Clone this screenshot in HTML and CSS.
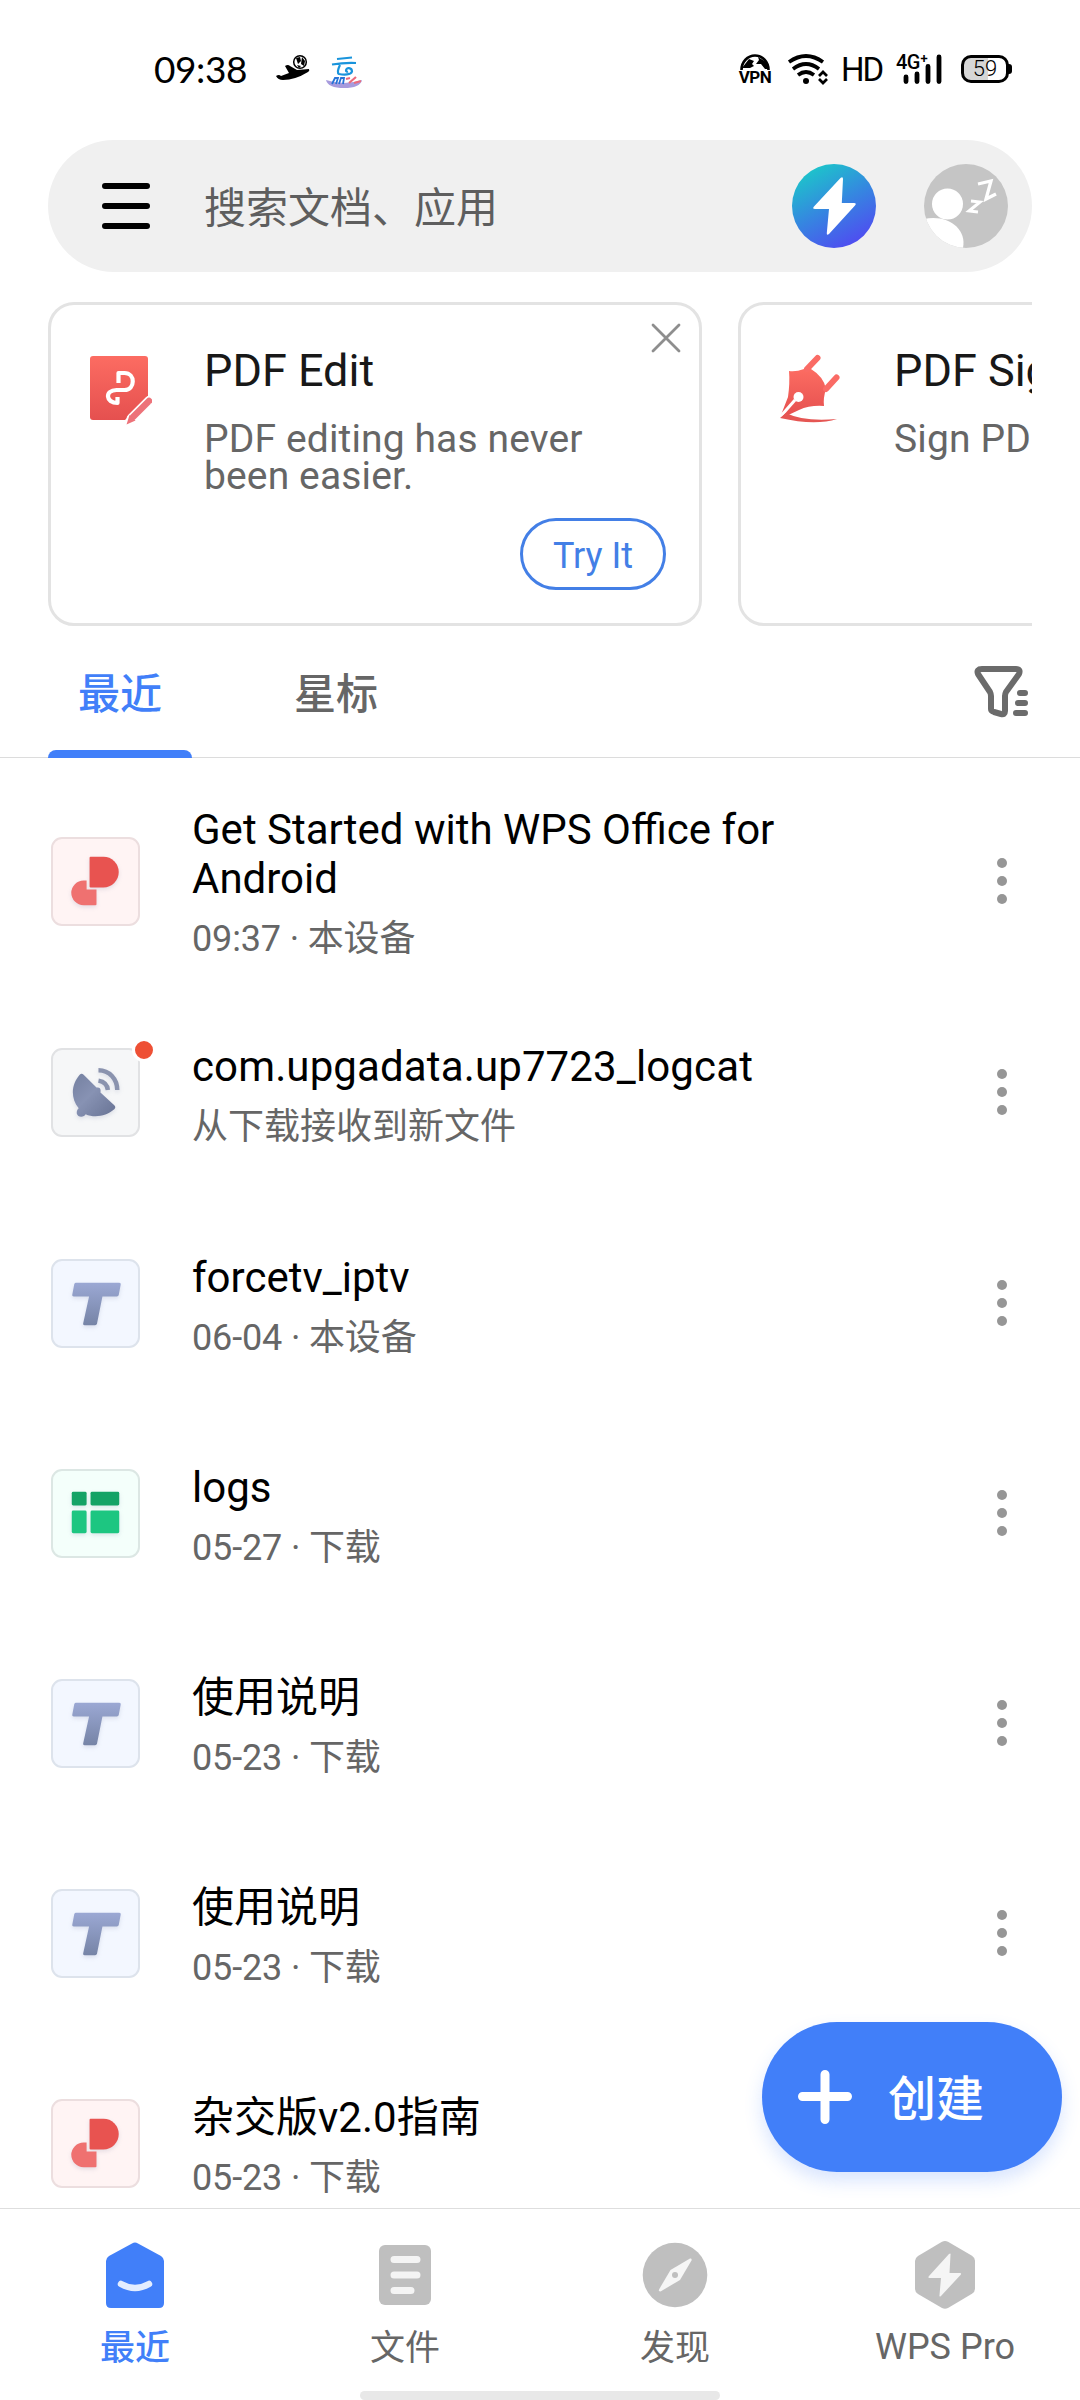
FILE: index.html
```html
<!DOCTYPE html>
<html lang="zh-CN">
<head>
<meta charset="utf-8">
<title>WPS Office</title>
<link rel="stylesheet" href="styles.css">
</head>
<body>
<svg class="defs" width="0" height="0">
  <defs>
    <linearGradient id="g-bolt" x1="0.2" y1="0" x2="0.75" y2="1"><stop offset="0" stop-color="#1acbc8"/><stop offset="0.5" stop-color="#3587e0"/><stop offset="1" stop-color="#5148f2"/></linearGradient>
    <linearGradient id="g-red" x1="0" y1="0" x2="0" y2="1"><stop offset="0" stop-color="#fc6c62"/><stop offset="1" stop-color="#e5504f"/></linearGradient>
    <linearGradient id="g-slate" x1="0" y1="0" x2="0" y2="1"><stop offset="0" stop-color="#9ba8d4"/><stop offset="1" stop-color="#7684a6"/></linearGradient>
    <linearGradient id="g-dish" x1="0" y1="0" x2="1" y2="1"><stop offset="0" stop-color="#7480a0"/><stop offset="0.45" stop-color="#8792b3"/><stop offset="1" stop-color="#687394"/></linearGradient>
    <symbol id="pdf" viewBox="0 0 90 90">
      <path d="M40 20h13a15.500 15.500 0 0 1 0 31H40a1 1 0 0 1-1-1V21a1 1 0 0 1 1-1z" fill="#e85350"/>
      <path d="M33 44h3v9h10v15a1 1 0 0 1-1 1H33a12.500 12.500 0 0 1 0-25z" fill="#ef7170"/>
    </symbol>
    <symbol id="txt" viewBox="0 0 90 90">
      <path d="M25 24h44a1.500 1.500 0 0 1 1.500 1.800l-2 10.700a2 2 0 0 1-2 1.500H52l-5.500 27.500a2 2 0 0 1-2 1.500H34a1.500 1.500 0 0 1-1.500-1.800L38.500 38H23a1.500 1.500 0 0 1-1.500-1.800l2-10.700A2 2 0 0 1 25 24z" fill="url(#g-slate)"/>
    </symbol>
    <symbol id="sheet" viewBox="0 0 90 90">
      <rect x="21" y="23" width="15" height="14" rx="1.500" fill="#14a366"/><rect x="40" y="23" width="29" height="14" rx="1.500" fill="#14a366"/>
      <rect x="21" y="42" width="15" height="23" rx="1.500" fill="#1dc681"/><rect x="40" y="42" width="29" height="23" rx="1.500" fill="#1dc681"/>
    </symbol>
    <symbol id="dish" viewBox="0 0 90 90">
      <path d="M29 27q2-2 4 0l13 13q5-1 4 5l14 13q2 2 0 4c-8 7-20 9-29 5-1 3-8 4-9-1 0-3 1-4 2-5-9-11-7-25 1-34z" fill="url(#g-dish)"/>
      <path d="M48 22.500c11 0 19 9 19 20" fill="none" stroke="#8a93ae" stroke-width="4.500"/>
      <path d="M48 33c6 1 9 4 9.500 9.500" fill="none" stroke="#8a93ae" stroke-width="4.500"/>
    </symbol>
  </defs>
</svg>

<header class="status">
  <span class="clock">09:38</span>
  <svg class="s-plane" viewBox="276 54 34 27" width="34" height="27">
    <circle cx="300" cy="62" r="6.300" fill="#fff" stroke="#000" stroke-width="1.500"/>
    <path d="M296 58l4-1 1 4-3 3zM302 57l3 4-1 5-3-2zM297 65l4 1-2 2z"/>
    <path d="M276 76q3-2 5 0l8-3-4-7q3-2 5 0l7 4 12-1q1 2-1 3-13 8-25 8-5 0-7-4z"/>
  </svg>
  <svg class="s-cloud" viewBox="325 54 38 34" width="38" height="34">
    <path d="M337 58l15-1.500M332 63.500q12-2 24-1.500M340 64c-2 4-3 8-1 9 5 1 12 1 13-2.500 0-4-6-4.500-6-1 0 1 1 1.500 2 1" fill="none" stroke="#1994dc" stroke-width="2.200"/>
    <path d="M326 79q18 6 36 0-2 8-18 8t-18-8z" fill="#a79bdd"/>
    <path d="M332 83l3-6h3l-2 6M339 83l2-6 3 0-1 6" fill="none" stroke="#2774d8" stroke-width="1.800"/>
    <path d="M346 78l4-1M349 82l7-6M354 82l7-2" fill="none" stroke="#ec6b7c" stroke-width="2.200"/>
  </svg>
  <span class="s-space"></span>
  <span class="vpn">
    <svg viewBox="0 0 30 16" width="30" height="16"><path d="M1.500 16a13.500 14.500 0 0 1 27 0" fill="#fff" stroke="#000" stroke-width="2.600"/><path d="M2 14L9 5l5 2-2 3 2 2-4 2zM18 3l8 5 3 7h-4l-4-5-5 0 3-4z"/></svg>
    <b>VPN</b>
  </span>
  <svg class="s-wifi" viewBox="789 53 41 32" width="41" height="32">
    <g fill="none" stroke="#000" stroke-width="3.700"><path d="M791 62q17-12 34 0M795 69q13-10 26 0M800 75q8-6 16 0"/><path d="M821 76l4-4 4 4M821 79l4 4 4-4" stroke-width="2.700"/></g><circle cx="808" cy="81" r="3"/>
  </svg>
  <span class="hd">HD</span>
  <span class="net"><i>4G⁺</i>
    <svg viewBox="0 0 39 30" width="39" height="30"><path d="M3 23v4.500M14 20v7.500M25 12.500v15M36 3v24.500" stroke="#000" stroke-width="4.800" stroke-linecap="round"/></svg>
  </span>
  <span class="battery"><span>59</span></span>
</header>

<div class="search">
  <svg class="burger" viewBox="0 0 48 46" width="48" height="46"><path d="M3 3h42M3 23h42M3 43h42" stroke="#000" stroke-width="6" stroke-linecap="round"/></svg>
  <span class="placeholder">搜索文档、应用</span>
  <svg viewBox="0 0 84 84" width="84" height="84"><circle cx="42" cy="42" r="42" fill="url(#g-bolt)"/><path d="M48.500 14q2.500-2 2.500 1l-1.200 24H62q3 0 1 2.500L37 70q-2.500 2-2.200-1L37 45H23q-3 0-1-2.500z" fill="#fff"/></svg>
  <svg viewBox="0 0 84 84" width="84" height="84"><clipPath id="av"><circle cx="42" cy="42" r="42"/></clipPath><g clip-path="url(#av)"><path d="M0 0h84v84H0z" fill="#c5c5c5"/><circle cx="23.500" cy="40" r="15.500" fill="#fff"/><path d="M0 55c23-5 43 9 39 29H0z" fill="#fff"/><path d="M47 37l9 1-11 9 9 1" fill="none" stroke="#fff" stroke-width="3"/><path d="M54 20l13-3-5 18 10-5" fill="none" stroke="#fff" stroke-width="3.300"/></g></svg>
</div>

<section class="cards">
  <article class="card">
    <svg class="card-icon" viewBox="86 350 66 76" width="66" height="76">
      <path d="M93 356h52q3 0 3 3v37l-23 24H93q-3 0-3-3v-58q0-3 3-3z" fill="url(#g-red)"/>
      <path d="M118.500 383v-10h6c11 0 11 17 0 17h-8c-12 0-11 13 1 13v-6" fill="none" stroke="#fff" stroke-width="4.200" stroke-linejoin="round"/>
      <path d="M150 401L132 419" stroke="#fff" stroke-width="11" stroke-linecap="round"/>
      <path d="M149 401L133 417" stroke="#ed7279" stroke-width="6.500" stroke-linecap="round"/><path d="M129.500 415l6 5.500-9 4z" fill="#ed7279"/>
    </svg>
    <div class="card-body"><h2>PDF Edit</h2><p>PDF editing has never been easier.</p></div>
    <button class="try">Try It</button>
    <svg class="close" viewBox="0 0 30 30" width="30" height="30"><path d="M2 2l26 26M28 2L2 28" stroke="#8e8e8e" stroke-width="2.800" stroke-linecap="round"/></svg>
  </article>
  <article class="card">
    <svg class="card-icon" viewBox="777 350 66 76" width="66" height="76">
      <path d="M790 371q7 1 15-2l7 0q13 8 15 20-3 9-2 17-14-1-25 4l-15 7q-2-2-3-2l7-18q2-14 1-26z" fill="url(#g-red)"/>
      <path d="M808 369l10.500-11M827 389l10.500-11.500" stroke="#fa6b65" stroke-width="6" stroke-linecap="round"/>
      <path d="M781 417l15-17" stroke="#fff" stroke-width="3"/><circle cx="799.500" cy="397" r="5" fill="#fff"/>
      <path d="M781 418l6-5q18 9 51 6-22 7-57-1z" fill="#e55653"/>
    </svg>
    <div class="card-body"><h2>PDF Sign</h2><p>Sign PDFs</p></div>
  </article>
</section>

<nav class="tabs">
  <span class="tab on">最近</span><span class="tab">星标</span>
  <svg class="filter" viewBox="974 664 58 56" width="58" height="56"><g fill="none" stroke="#6b6b6b" stroke-linejoin="round" stroke-linecap="round"><path d="M982 669h34q5 0 3 5l-13 18q-1 2-1 4v15q0 4-4 3l-7-2q-3-1-3-3v-13q0-2-1-4l-12-18q-2-5 4-5z" stroke-width="6"/><path d="M1020 693h5M1018 703h7M1016 713h9" stroke-width="6"/></g></svg>
</nav>

<main class="list">
  <div class="row first"><span class="file red"><svg><use href="#pdf"/></svg></span><div class="info"><h3>Get Started with WPS Office for Android</h3><p>09:37 · 本设备</p></div><span class="more"><i></i><i></i><i></i></span></div>
  <div class="row second"><span class="file gray"><svg><use href="#dish"/></svg><em class="badge"></em></span><div class="info"><h3>com.upgadata.up7723_logcat</h3><p>从下载接收到新文件</p></div><span class="more"><i></i><i></i><i></i></span></div>
  <div class="row"><span class="file blue"><svg><use href="#txt"/></svg></span><div class="info"><h3>forcetv_iptv</h3><p>06-04 · 本设备</p></div><span class="more"><i></i><i></i><i></i></span></div>
  <div class="row"><span class="file green"><svg><use href="#sheet"/></svg></span><div class="info"><h3>logs</h3><p>05-27 · 下载</p></div><span class="more"><i></i><i></i><i></i></span></div>
  <div class="row"><span class="file blue"><svg><use href="#txt"/></svg></span><div class="info"><h3>使用说明</h3><p>05-23 · 下载</p></div><span class="more"><i></i><i></i><i></i></span></div>
  <div class="row"><span class="file blue"><svg><use href="#txt"/></svg></span><div class="info"><h3>使用说明</h3><p>05-23 · 下载</p></div><span class="more"><i></i><i></i><i></i></span></div>
  <div class="row"><span class="file red"><svg><use href="#pdf"/></svg></span><div class="info"><h3>杂交版v2.0指南</h3><p>05-23 · 下载</p></div></div>
</main>

<button class="create"><svg viewBox="0 0 54 54" width="54" height="54"><path d="M27 4.500v45M4.500 26.500h45" stroke="#fff" stroke-width="9" stroke-linecap="round"/></svg><span>创建</span></button>

<footer class="bottom">
  <div class="item on"><svg viewBox="0 0 70 70" width="70" height="70"><path d="M32 3.500q3-2 6 0L61 16q3 2 3 5v42q0 5-5 5H11q-5 0-5-5V21q0-3 3-5z" fill="#417ff9"/><path d="M21 44q14 8 28 0" fill="none" stroke="#e3edff" stroke-width="6.500" stroke-linecap="round"/></svg><span>最近</span></div>
  <div class="item"><svg viewBox="0 0 70 70" width="70" height="70"><rect x="9" y="5" width="52" height="60" rx="6" fill="#bfbfbf"/><path d="M24 19.500h23M24 35h23M24 50.500h17" stroke="#f4f4f4" stroke-width="7" stroke-linecap="round"/></svg><span>文件</span></div>
  <div class="item"><svg viewBox="0 0 70 70" width="70" height="70"><circle cx="35" cy="35" r="32.300" fill="#bfbfbf"/><path d="M50 18.500q2-.5 1.500 2L40 40 20.500 51.500q-2 0-1.500-2L30.500 30z" fill="#f6f6f6"/><circle cx="35" cy="35" r="3" fill="#bfbfbf"/></svg><span>发现</span></div>
  <div class="item pro"><svg viewBox="0 0 70 70" width="70" height="70"><path d="M32 1.800q3-1.600 6 0l24 14q3 2 3 5v28q0 3-3 5L38 68q-3 1.600-6 0L8 54q-3-2-3-5V21q0-3 3-5z" fill="#bfbfbf"/><path d="M39 14q2-1.500 1.500 1L39.500 33H50q2 0 .5 2L31 56q-2 1.500-1.500-1L31 38H19.500q-2 0-.5-2z" fill="#f5f5f5"/></svg><span>WPS Pro</span></div>
</footer>
<div class="homebar"></div>
</body>
</html>
```
FILE: styles.css
```css
* { box-sizing: border-box; margin: 0; padding: 0; }
body { width: 1080px; height: 2400px; overflow: hidden; background: #fff; position: relative; display: flex; flex-direction: column; font-family: Roboto, "Noto Sans CJK SC", sans-serif; color: #000; }
svg { display: block; flex: none; }
button { background: none; border: 0; font-family: inherit; }
.defs { position: absolute; }

.status { height: 140px; flex: none; display: flex; align-items: flex-start; padding: 0 71px 0 154px; }
.clock { font: 37px/46px Lato, sans-serif; width: 95px; margin-top: 46px; letter-spacing: -0.4px; white-space: nowrap; }
.s-plane { margin: 54px 0 0 27px; }
.s-cloud { margin: 55px 0 0 15px; }
.s-space { flex: 1; }
.vpn { width: 32px; margin: 54px 16px 0 0; display: flex; flex-direction: column; align-items: center; }
.vpn b { font: 700 17px/15px Roboto, sans-serif; letter-spacing: -0.5px; }
.s-wifi { margin-top: 53px; }
.hd { font: 33px/40px Roboto, sans-serif; margin: 50px 0 0 13px; width: 40px; letter-spacing: -2px; }
.net { position: relative; width: 46px; height: 32px; margin: 54px 19px 0 15px; display: flex; justify-content: flex-end; }
.net i { position: absolute; left: 0; top: -3px; font: 500 20px/22px Roboto, sans-serif; letter-spacing: -0.5px; white-space: nowrap; }
.battery { position: relative; width: 48px; height: 28px; margin-top: 55px; border: 3px solid #000; border-radius: 10px; background: linear-gradient(90deg, #d6d6d6 58%, #fff 58%); font: 300 22px/22px Roboto, sans-serif; text-align: center; }
.battery::after { content: ""; position: absolute; right: -6px; top: 6px; width: 4px; height: 10px; background: #000; border-radius: 0 3px 3px 0; }

.search { height: 132px; flex: none; margin: 0 48px; padding: 0 24px 0 54px; border-radius: 66px; background: #f0f0f0; display: flex; align-items: center; }
.placeholder { flex: 1; margin-left: 54px; padding-top: 5px; font-size: 42px; line-height: 60px; color: #5e5e5e; }
.search svg:last-child { margin-left: 48px; }

.cards { margin: 30px 48px 0; height: 324px; flex: none; display: flex; gap: 36px; overflow: hidden; }
.card { position: relative; width: 654px; flex: none; border: 3px solid #e3e3e3; border-radius: 26px; display: flex; padding: 45px 30px 0 35px; }
.card-body { margin-left: 52px; width: 430px; margin-top: -5px; }
.card h2 { font-weight: 400; font-size: 45px; line-height: 52px; color: #181818; }
.card p { margin-top: 24px; font-size: 39px; line-height: 37px; letter-spacing: 0.13px; color: #666; }
.try { position: absolute; right: 33px; bottom: 33px; width: 146px; height: 72px; border: 3px solid #437fe6; border-radius: 36px; color: #437fe6; font-size: 36px; line-height: 66px; padding-top: 2px; }
.close { position: absolute; right: 18px; top: 18px; }

.tabs { height: 132px; flex: none; border-bottom: 1px solid #dcdcdc; padding: 0 48px; display: flex; align-items: stretch; }
.tab { position: relative; width: 144px; margin-right: 72px; text-align: center; font-size: 42px; line-height: 137px; font-weight: 500; color: #666; }
.tab.on { color: #417ff9; }
.tab.on::after { content: ""; position: absolute; left: 0; right: 0; bottom: -1px; height: 8px; border-radius: 8px 8px 0 0; background: #417ff9; }
.filter { margin: 38px 0 0 auto; }

.list { height: 1450px; flex: none; overflow: hidden; padding: 17px 0 0 51px; }
.row { height: 210px; display: flex; align-items: center; }
.row.first { height: 211px; }
.row.second { height: 212px; }
.file { position: relative; width: 89px; height: 89px; flex: none; border: 2px solid; border-radius: 11px; }
.first .file { margin-top: 2px; }
.file svg { width: 89px; height: 89px; margin: -2px; filter: drop-shadow(0 2px 2px rgba(90, 100, 140, .16)); }
.red { background: #fff4f4; border-color: #ecdedf; }
.gray { background: #f6f7f8; border-color: #e1e2e4; }
.blue { background: #f3f7ff; border-color: #dde3ec; }
.green { background: #f4fffb; border-color: #dce7e4; }
.badge { position: absolute; right: -18px; top: -12px; width: 24px; height: 24px; border: 3px solid #fff; border-radius: 50%; background: #ee5035; }
.info { width: 640px; margin-left: 52px; padding-top: 5px; }
.first .info { padding-top: 4px; }
.info h3 { font-weight: 400; font-size: 42px; line-height: 49px; }
.second h3 { letter-spacing: 0.13px; }
.info p { margin-top: 15px; font-size: 36px; line-height: 42px; letter-spacing: -0.15px; color: #666; white-space: nowrap; }
.second p { letter-spacing: 0; }
.more { margin-left: 165px; display: flex; flex-direction: column; gap: 8px; }
.more i { width: 10px; height: 10px; border-radius: 50%; background: #969696; }

.create { position: absolute; left: 762px; top: 2022px; width: 300px; height: 150px; border-radius: 75px; background: #417ff9; color: #fff; display: flex; align-items: center; padding-left: 36px; box-shadow: 0 9px 18px rgba(65, 127, 249, .2); }
.create svg { margin-top: -1px; }
.create span { margin: 5px 0 0 36px; font-size: 48px; font-weight: 500; line-height: 60px; }

.bottom { height: 183px; flex: none; border-top: 1px solid #dedede; display: grid; grid-template-columns: repeat(4, 1fr); padding-top: 31px; }
.item { display: flex; flex-direction: column; align-items: center; font-size: 35px; line-height: 42px; color: #666; }
.item span { margin-top: 18px; }
.item.on { color: #417ff9; font-weight: 500; }
.item.pro { font-size: 36px; }
.item.pro span { margin-top: 16px; }
.homebar { width: 360px; height: 9px; margin: 0 auto; border-radius: 5px; background: #e8e8e8; }
```
